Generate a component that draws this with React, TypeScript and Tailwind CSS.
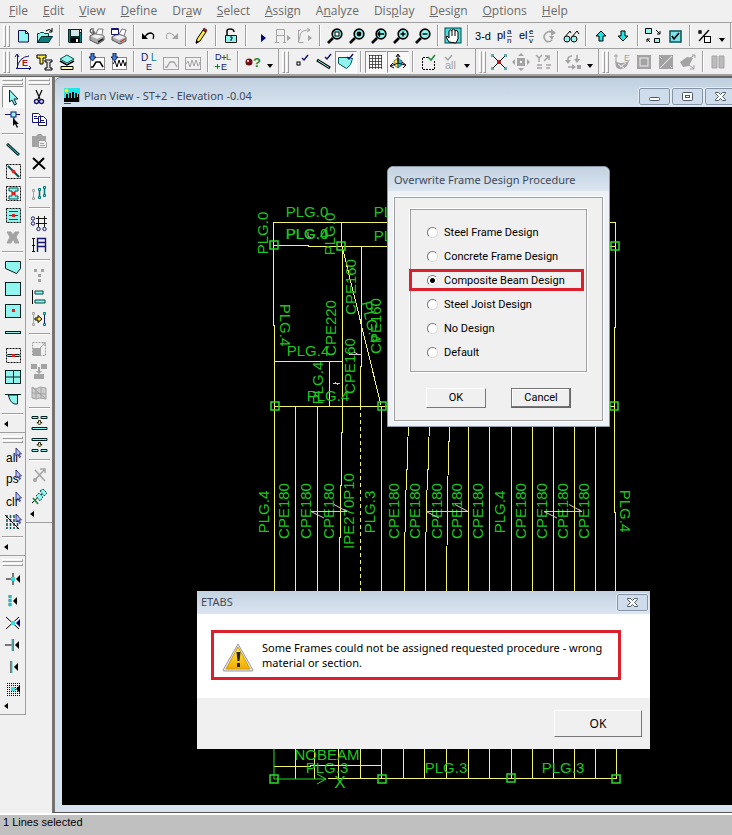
import React, { useState } from "react";
import clsx from "clsx";

const menus = [
	"File",
	"Edit",
	"View",
	"Define",
	"Draw",
	"Select",
	"Assign",
	"Analyze",
	"Display",
	"Design",
	"Options",
	"Help",
];

// index of the underlined letter, when it is not the first one
const hotkeys: Record<string, number> = { Draw: 2, Analyze: 1, Display: 3 };

const CY = "#8ff5ee";
const TEAL = "#0a7c80";
const GR = "#a3a3a3";
const NAVY = "#16166e";

const Lens = ({ children }: { children: React.ReactNode }) => (
	<g>
		<path d="M7 11L2 16" stroke="#000" strokeWidth="2.6" />
		<circle cx="11" cy="7" r="4.8" fill={CY} stroke="#000" strokeWidth="1.7" />
		{children}
	</g>
);

const Dots = () => (
	<rect x="2.5" y="2.5" width="14" height="14" stroke="#000" strokeDasharray="2 1" />
);

const SmallCursor = () => (
	<path d="M12 1v8l2-1.500 1.500 3 1-.5-1.500-3h2.500z" fill="#b8c4f0" stroke={NAVY} strokeWidth=".8" />
);

const LeftHead = () => <path d="M16 5v8l-4-4z" fill="#000" />;

const icons: Record<string, React.ReactNode> = {
	// file
	new: (
		<path d="M4.500 3.500h7l3 3v8.500h-10zM11.500 3.500v3h3" fill={CY} stroke="#114" />
	),
	open: (
		<g>
			<path d="M1.500 15.500v-9h2l1-1h3l1 1h4v3" fill={CY} stroke="#044" />
			<path d="M1.500 15.500l4-6h11l-4 6z" fill={TEAL} stroke="#022" />
			<path d="M10 4q3-3 6 0M16 1v4h-3" stroke="#000" />
		</g>
	),
	save: (
		<g>
			<path d="M2 2h14v14H3l-1-1z" fill="#042a2c" />
			<path d="M5 3h8v6H5z" fill="#d5e5e5" />
			<path d="M5 11h8v5H5z" fill="#000" />
			<path d="M10 12h2v3h-2zM14 3h1v2h-1z" fill="#fff" />
			<path d="M3 3h1v12H3zM14 6h1v9h-1z" fill={TEAL} />
		</g>
	),
	print: (
		<g>
			<path d="M2 9l5-3 9 3v4l-6 4-8-4z" fill="#aaa" stroke="#555" />
			<path d="M3 9l6 3 7-3-6-2z" fill="#eee" />
			<path d="M8 7l2-5h5l-1 6z" fill="#fff" stroke="#777" />
			<path d="M6 2q-4-1-4 2t4 2V4H4" stroke="#333" />
			<path d="M10 15l5-3" stroke="#222" strokeWidth="1.500" />
		</g>
	),
	preview: (
		<g>
			<path d="M2 10l5-3 9 3v4l-6 3-8-4z" fill="#aaa" stroke="#555" />
			<path d="M3 10l6 3 7-3-6-2z" fill="#eee" />
			<path d="M9 7l3-5 4 1-2 6z" fill="#fff" stroke="#777" />
			<path d="M1.500 1.500h7v6h-7z" fill="#fff" stroke={NAVY} />
			<path d="M1 2.500h8" stroke={NAVY} />
			<path d="M10 15l5-3" stroke="#c22" />
		</g>
	),
	undo: (
		<g>
			<path d="M2 6v6h6z" fill="#000" />
			<path d="M5 10q2-4 6-4 4 1 2 6" stroke="#000" strokeWidth="1.300" />
		</g>
	),
	redo: (
		<g>
			<path d="M16 6v6h-6z" fill={GR} />
			<path d="M13 10q-2-4-6-4-4 1-2 6" stroke={GR} />
		</g>
	),
	pencil: (
		<g>
			<path d="M5 12L11 3l3 2-6 9-4 2z" fill="#ffe93b" stroke="#000" />
			<path d="M11 3l1-2 3 2-1 2z" fill="#c22" stroke="#000" strokeWidth=".6" />
			<path d="M4 13v4l3-2z" fill="#000" />
		</g>
	),
	lock: (
		<g>
			<path d="M5 8V4q0-2 3-2 4 0 4 3" stroke="#111" strokeWidth="1.600" />
			<path d="M3.500 8.500h11v7h-11z" fill={CY} stroke="#111" />
			<path d="M8 10h2v2h-1v2" stroke="#111" />
		</g>
	),
	play: <path d="M9 7l5 4-5 4z" fill="#000080" />,
	frameStep: (
		<g>
			<path d="M2.500 15V2.500h8V15M2.500 8.500h8M1 15.500h4M9 15.500h3" stroke={GR} />
			<path d="M13 8l4 3-4 3z" fill={GR} />
		</g>
	),
	curveStep: (
		<g>
			<path d="M2.500 3v12.500h5M2.500 15l2-8q1-4 9-4M11 1l3 2-3 2M2 5l3-3" stroke={GR} />
			<path d="M12 8l4 3-4 3z" fill={GR} />
		</g>
	),
	// zoom
	zoomRect: (
		<Lens>
			<rect x="9" y="5" width="4" height="4" fill="#fff" stroke="#000" />
		</Lens>
	),
	zoomFull: (
		<Lens>
			<circle cx="11" cy="7" r="2.400" fill="#000" />
		</Lens>
	),
	zoomPrev: (
		<Lens>
			<path d="M8 7h6M10 4.500L8 7l2 2.500" stroke="#000" strokeWidth="1.400" />
		</Lens>
	),
	zoomIn: (
		<Lens>
			<path d="M8.500 7h5M11 4.500v5" stroke="#000" strokeWidth="1.400" />
		</Lens>
	),
	zoomOut: (
		<Lens>
			<path d="M8.500 7h5" stroke="#000" strokeWidth="1.400" />
		</Lens>
	),
	pan: (
		<g>
			<rect x="1" y="1" width="16" height="15" fill="#49dfe0" stroke="#044" />
			<path
				d="M5 15l-3-5 1-1 2 2V4l1.500-1L8 4V3l1.500-1L11 3v1l1.500-1L14 5v7l-2 4z"
				fill="#fff"
				stroke="#000"
			/>
			<path d="M8 4v5M11 4v5" stroke="#000" />
		</g>
	),
	view3d: (
		<text x="9" y="13" textAnchor="middle" fontSize="11" fill="#000">
			3-d
		</text>
	),
	plan: (
		<g fontSize="11" fill="#000">
			<text x="1" y="12">pl</text>
			<text x="11" y="7" fontSize="8">a</text>
			<text x="11" y="16" fontSize="8">n</text>
			<path d="M11 9.500h5" stroke="#000" strokeWidth=".6" />
		</g>
	),
	elev: (
		<g fontSize="11" fill="#000">
			<text x="1" y="12">el</text>
			<text x="11" y="7" fontSize="8">e</text>
			<text x="11" y="16" fontSize="8">v</text>
			<path d="M11 9.500h5" stroke="#000" strokeWidth=".6" />
		</g>
	),
	rotate: (
		<g>
			<path d="M12 13q-3 3-6 1-4-4 0-8 2-2 6-1" stroke={GR} strokeWidth="1.600" />
			<path d="M11 2l5 4-5 3zM9 9h5l-2 4z" fill={GR} />
		</g>
	),
	glasses: (
		<g>
			<circle cx="5" cy="12" r="3" fill={CY} stroke="#000" />
			<circle cx="12" cy="12" r="3" fill={CY} stroke="#000" />
			<path d="M2 11l6-7 1 2M9 11l6-7 2 3" stroke="#000" />
		</g>
	),
	up: <path d="M9 4l5 5h-3v5H7V9H4z" fill="#22e4e4" stroke="#000" />,
	down: <path d="M9 14L4 9h3V4h4v5h3z" fill="#22e4e4" stroke="#000" />,
	shrink: (
		<g>
			<path d="M1.500 1.500h6v5h-6zM10.500 11.500h5v4h-5z" fill={CY} stroke="#000" />
			<path d="M12 3l4 4M16 4v3h-3M6 15l-3-3M3 15v-3h3" stroke="#000" />
		</g>
	),
	check: (
		<g>
			<rect x="4" y="4" width="11" height="11" fill="#7fdfe8" stroke="#055" strokeWidth="1.500" />
			<path d="M6 9l2 3 5-6" stroke="#000" strokeWidth="1.500" />
		</g>
	),
	percent: (
		<g>
			<path d="M3 14L13 3M3 4h2v2H3z" stroke="#000" strokeWidth="1.300" />
			<rect x="8.500" y="9.500" width="6" height="6" stroke="#000" fill="#fff" />
		</g>
	),
	// define
	material: (
		<g>
			<path d="M3.500 2v13M2 15.500h14M3 15Q5 4 15 3M1 4l2-3 2 3M15 13l2 2-2 2" stroke={NAVY} />
			<text x="8" y="13" fontSize="9" fontWeight="bold" fill="#a01818">E</text>
		</g>
	),
	section: (
		<g>
			<path d="M1 2h9v3H7v6H4V5H1z" fill="#ffe93b" stroke="#000" />
			<path d="M9 7h7v2h-2v6h2v2H9v-2h2V9H9z" fill="#ddd" stroke="#000" />
		</g>
	),
	slab: (
		<g>
			<path d="M2 6l7-4 7 4-7 4z" fill={CY} stroke="#055" />
			<path d="M2 8l7 4 7-4" stroke="#000" strokeWidth="1.500" />
			<path d="M3 13.500h12v3H3z" fill="#fff59a" stroke="#000" />
		</g>
	),
	spectrum: (
		<g>
			<rect x="2.500" y="4.500" width="14" height="12" fill="#fff" stroke="#888" />
			<path d="M3 14h2l3-5h4l3 5" stroke="#000" strokeWidth="1.500" />
			<path d="M3 0h3v4h2L4.500 8 1 4h2z" fill="#38c" stroke={NAVY} />
		</g>
	),
	history: (
		<g>
			<rect x="2.500" y="4.500" width="14" height="12" fill="#fff" stroke="#888" />
			<path d="M3 11l2-3 2 6 2-7 2 6 2-6 2 6 1-4" stroke="#000" />
			<path d="M3 0h3v4h2L4.500 8 1 4h2z" fill="#38c" stroke={NAVY} />
		</g>
	),
	loadCases: (
		<g fontSize="10" fill={NAVY}>
			<text x="1" y="8">D</text>
			<text x="11" y="8" fill={TEAL}>L</text>
			<text x="6" y="17" fontSize="9">E</text>
		</g>
	),
	spectrumOff: (
		<g>
			<rect x="1.500" y="4.500" width="15" height="12" stroke={GR} />
			<path d="M3 14h2l3-5h4l3 5" stroke={GR} strokeWidth="1.300" />
		</g>
	),
	historyOff: (
		<g>
			<rect x="1.500" y="4.500" width="15" height="12" stroke={GR} />
			<path d="M2 11l2-3 2 6 2-7 2 6 2-6 2 6 2-4" stroke={GR} />
		</g>
	),
	combos: (
		<g fontSize="9" fill={NAVY}>
			<text x="1" y="7">D</text>
			<text x="12" y="7" fill={TEAL}>L</text>
			<text x="7" y="17">E</text>
			<path d="M7.500 4.500h5M10 2v5M1 13.500h5M3.500 11v5" stroke="#1a7a2a" />
		</g>
	),
	mass: (
		<g>
			<circle cx="5" cy="9" r="3.500" fill="#6b0f14" />
			<circle cx="4" cy="8" r="1.200" fill="#fbb" />
			<text x="9" y="14" fontSize="13" fontWeight="bold" fill="#2a8a3a">?</text>
		</g>
	),
	// snap and assign toggles
	drawPoint: (
		<g>
			<rect x="4" y="9" width="3" height="3" stroke="#000" />
			<path d="M9 5l2 2 4-5" stroke={NAVY} strokeWidth="1.500" />
		</g>
	),
	drawLine: (
		<g>
			<path d="M2 7l13 8" stroke="#000" strokeWidth="3" />
			<path d="M3 7.500l11 7" stroke={CY} />
			<path d="M10 4l2 2 4-5" stroke={NAVY} strokeWidth="1.500" />
		</g>
	),
	drawArea: (
		<g>
			<path d="M1.500 4.500h11l3 1-2 6-4 4-8-5z" fill={CY} stroke="#055" />
			<path d="M10 4l2 2 4-5" stroke={NAVY} strokeWidth="1.500" />
		</g>
	),
	grid: (
		<path
			d="M2.500 2v14M5.500 2v14M8.500 2v14M11.500 2v14M14.500 2v14M2 2.500h13M2 5.500h13M2 8.500h13M2 11.500h13M2 14.500h13"
			stroke="#333"
			strokeWidth=".8"
		/>
	),
	axes: (
		<g>
			<path d="M5 8l4-3v10l-4-3z" fill="#ffe93b" stroke="#333" strokeWidth=".6" />
			<path d="M9 5l4 3v4l-4 3z" fill="#27b7d8" stroke="#333" strokeWidth=".6" />
			<path d="M9 9V2M7 4l2-3 2 3M9 10l-7 3M4 10l-3 3 4 2M9 10l7 2M13 9l4 3-3 3" stroke="#000" />
		</g>
	),
	selectBox: (
		<g>
			<path d="M9 4.500H3.500v12h12V8" stroke="#000" strokeDasharray="2 1" />
			<path d="M9 4l3 3 4-5" stroke="#258a35" strokeWidth="1.600" />
		</g>
	),
	selectAllOff: (
		<g>
			<path d="M4 4l3 3 4-5" stroke={GR} strokeWidth="1.500" />
			<text x="4" y="16" fontSize="11" fill={GR}>all</text>
		</g>
	),
	meshPoint: (
		<g>
			<path d="M3 3l12 12M15 3L3 15" stroke="#000" />
			<path d="M1 1h3v3H1zM14 1h3v3h-3zM1 14h3v3H1zM14 14h3v3h-3z" fill={TEAL} opacity=".6" />
			<circle cx="9" cy="9" r="2" fill="#b01020" />
		</g>
	),
	moveOff: (
		<g fill={GR}>
			<path d="M5 5h8v8H5zM9 0l3 3H6zM9 18l3-3H6zM0 9l3-3v6zM18 9l-3-3v6z" />
			<path d="M8 8h2v2H8z" fill="#fff" />
		</g>
	),
	splitOff: (
		<g>
			<path d="M2 2l3 3 3-3M5 5v4M11 3h4v4M10 8l5-5M3 12h5M12 12h5M3 15h5M12 15h4" stroke={GR} strokeWidth="1.500" />
		</g>
	),
	swapOff: (
		<g>
			<path d="M8 3Q3 3 4 9M13 2v6M4 14h5" stroke={GR} strokeWidth="1.600" />
			<path d="M1 7h6l-3 4zM10 6h6l-3 4zM8 11l4 3-4 3zM13 12h4v4h-4z" fill={GR} />
		</g>
	),
	stressOff: (
		<g>
			<path d="M2 8q6 4 14 0l-2 5q-6 6-11 1z" fill={GR} />
			<path d="M1 3h4M3 1v8" stroke={GR} />
			<text x="11" y="8" fontSize="9" fill={GR}>E</text>
			<path d="M5 11l6 4M7 14l6-4" stroke="#eee" />
		</g>
	),
	areaHoleOff: (
		<g>
			<rect x="2" y="2" width="14" height="14" fill={GR} />
			<rect x="5" y="5" width="8" height="8" stroke="#eee" />
		</g>
	),
	areaCutOff: (
		<g>
			<rect x="2" y="2" width="14" height="14" fill={GR} />
			<path d="M3 15L15 3M3 4l2 2M13 13l2 2" stroke="#eee" />
		</g>
	),
	areaTurnOff: (
		<g>
			<path d="M1 9l7-5 6 1-4 8-6 1z" fill={GR} />
			<path d="M11 5l5-3M13 2h3v3M9 11l6 5M15 12v4h-4" stroke={GR} />
		</g>
	),
	wallsOff: <path d="M3 3h5v12H3zM10 3h5v12h-5z" fill="#bbb" stroke={GR} />,
	// draw palette
	pointer: (
		<path d="M5.500 2v12l2.500-2 2.500 5 2-1-2.500-5H14z" fill={CY} stroke="#023" />
	),
	reshape: (
		<g>
			<path d="M1 4.500h15M10 4v6" stroke={NAVY} />
			<rect x="7" y="2" width="5" height="5" fill={CY} stroke={NAVY} />
			<path d="M9 8v8l2-2 2 4 1-1-1.500-3H15z" fill="#000" />
		</g>
	),
	line: (
		<g>
			<path d="M3 4l12 11" stroke="#022" strokeWidth="3" />
			<path d="M3.500 4.500l11 10" stroke="#4cc" />
		</g>
	),
	lineRegion: (
		<g>
			<Dots />
			<path d="M4 4l11 11" stroke="#055" strokeWidth="2" />
			<circle cx="9.500" cy="9.500" r="1.800" fill="#d22" />
		</g>
	),
	column: (
		<g>
			<Dots />
			<path d="M5 4h9v3h-3v5h3v3H5v-3h3V7H5z" fill={CY} stroke="#055" />
			<rect x="8" y="8" width="3" height="3" fill="#d22" />
		</g>
	),
	secondary: (
		<g>
			<rect x="2.500" y="2.500" width="14" height="14" fill={CY} stroke="#000" strokeDasharray="2 1" />
			<path d="M5 5.500h9M5 9.500h9M5 13.500h9" stroke="#055" />
			<rect x="8" y="8" width="3" height="3" fill="#d22" />
		</g>
	),
	braceOff: (
		<path d="M3 4h4l2 3 2-3h4l-3 5 3 6h-4l-2-4-2 4H3l3-6z" fill={GR} stroke={GR} />
	),
	area: <path d="M1.500 3.500h15v7l-4 5-11-5z" fill={CY} stroke="#022" />,
	rect: <rect x="1.500" y="2.500" width="15" height="13" fill={CY} stroke="#022" />,
	rectPoint: (
		<g>
			<rect x="1.500" y="2.500" width="15" height="13" fill={CY} stroke="#022" />
			<rect x="8" y="7" width="3" height="3" fill="#d22" />
		</g>
	),
	wall: <rect x="1.500" y="7.500" width="15" height="2" fill={CY} stroke="#022" />,
	wallPoint: (
		<g>
			<Dots />
			<rect x="4" y="8.500" width="11" height="2" fill={CY} stroke="#022" />
			<rect x="8" y="8" width="3" height="3" fill="#d22" />
		</g>
	),
	opening: (
		<g>
			<rect x="1.500" y="2.500" width="15" height="13" fill={CY} stroke="#022" />
			<path d="M9.500 2v14M1 9h16" stroke="#022" />
		</g>
	),
	developed: (
		<g>
			<path d="M1 4.500h16" stroke="#022" />
			<path d="M4.500 5h9v9h-3q-5-2-6-9z" fill={CY} stroke="#022" />
		</g>
	),
	selAll: (
		<g>
			<text x="2" y="15" fontSize="12" fill="#000">all</text>
			<SmallCursor />
		</g>
	),
	selPrev: (
		<g>
			<text x="2" y="14" fontSize="12" fill="#000">ps</text>
			<SmallCursor />
		</g>
	),
	selClear: (
		<g>
			<text x="2" y="15" fontSize="12" fill="#000">clr</text>
			<SmallCursor />
		</g>
	),
	selLine: (
		<g>
			<path d="M3 2v14M6.500 2v14M10 2v14M13.500 2v14" stroke="#055" strokeWidth="1.500" strokeDasharray="3 1" />
			<path d="M1 2l14 14" stroke="#000" />
			<SmallCursor />
		</g>
	),
	snapPoint: (
		<g>
			<path d="M2 9h9M9 3v12" stroke="#000" />
			<rect x="7" y="7" width="4" height="4" fill="#3dd" />
			<LeftHead />
		</g>
	),
	snapMid: (
		<g>
			<path d="M6 3v12" stroke="#188" strokeWidth="3" strokeDasharray="3 1" />
			<path d="M6 3v12" stroke="#3ee" />
			<path d="M13 5v8l-4-4z" fill="#000" />
		</g>
	),
	snapCross: (
		<g>
			<path d="M2 3l13 12M15 3L2 15" stroke="#000" />
			<rect x="7" y="7" width="4" height="4" fill="#3dd" />
			<path d="M16 5v8l-4-4z" fill="#000060" />
		</g>
	),
	snapPerp: (
		<g>
			<path d="M1 9h7M9 3v12" stroke="#000" />
			<path d="M8 3v12" stroke="#3cc" />
			<path d="M15 5v8l-4-4z" fill="#000" />
		</g>
	),
	snapLine: (
		<g>
			<path d="M7 3v12" stroke="#000" />
			<path d="M8 3v12" stroke="#3cc" />
			<path d="M14 5v8l-4-4z" fill="#000" />
		</g>
	),
	snapFine: (
		<g>
			<path
				d="M3 3.500h13M3 5.500h13M3 7.500h13M3 9.500h13M3 11.500h13M3 13.500h13M3 15.500h13"
				stroke="#000"
				strokeDasharray="1 1"
			/>
			<rect x="7" y="7" width="4" height="4" fill="#3dd" />
			<LeftHead />
		</g>
	),
	// edit palette
	cut: (
		<g>
			<path d="M6 2l4 9M12 2L8 11" stroke="#111" strokeWidth="1.300" />
			<circle cx="6.500" cy="13.500" r="2" stroke={NAVY} strokeWidth="1.400" />
			<circle cx="11.500" cy="13.500" r="2" stroke={NAVY} strokeWidth="1.400" />
		</g>
	),
	copy: (
		<g>
			<path d="M2.500 3.500h6l2 2v7h-8zM8.500 6.500h5l3 3v6h-8z" fill="#fff" stroke={NAVY} />
			<path d="M4 6.500h3M4 8.500h4M10 10.500h4M10 12.500h5" stroke={NAVY} />
		</g>
	),
	pasteOff: (
		<g>
			<path d="M2 4h4l2-2h3l2 2h3v11H2z" fill={GR} />
			<path d="M8.500 8.500h6l2 2v5h-8z" fill="#eee" stroke={GR} />
			<path d="M10 11.500h4M10 13.500h5" stroke={GR} />
		</g>
	),
	remove: <path d="M3 4l12 11M14 4L3 15" stroke="#000" strokeWidth="2" />,
	replicate: (
		<g>
			<path d="M3.500 7v7" stroke={GR} />
			<path d="M9.500 5v8M14.500 3v8" stroke="#077" strokeWidth="1.500" />
			<path d="M2.500 5.500h2v2h-2zM2.500 13.500h2v2h-2z" fill="#eee" stroke={GR} />
			<path d="M8.500 4.500h2v2h-2zM8.500 12.500h2v2h-2zM13.500 2.500h2v2h-2zM13.500 10.500h2v2h-2z" fill={CY} stroke="#077" />
		</g>
	),
	editGrid: (
		<g>
			<path d="M6 4.500h11M6 9.500h11M8.500 2v11M14.500 2v11" stroke="#111" />
			<g stroke={NAVY}>
				<circle cx="3" cy="4.500" r="1.700" />
				<circle cx="3" cy="9.500" r="1.700" />
				<circle cx="8.500" cy="15" r="1.700" />
				<circle cx="14.500" cy="15" r="1.700" />
			</g>
		</g>
	),
	editStory: (
		<g>
			<path d="M3.500 2v14M2 2.500h3M2 9.500h3M2 15.500h3" stroke="#111" />
			<path d="M7.500 16V2.500h8V16M7.500 6.500h8M7.500 10.500h8" stroke={NAVY} strokeWidth="1.400" />
		</g>
	),
	mergeOff: (
		<g fill={GR}>
			<path d="M4 3h3v3H4zM11 3h3v3h-3zM8 8h3v3H8zM8 13h3v3H8z" />
		</g>
	),
	align: (
		<g>
			<path d="M2.500 2v14" stroke="#000" />
			<path d="M5 3h8v3H5zM5 12h10v3H5z" fill={CY} stroke="#044" />
		</g>
	),
	moveLines: (
		<g>
			<path d="M3.500 3v12" stroke={GR} />
			<path d="M14.500 3v12" stroke={NAVY} />
			<path d="M2.500 2.500h2v2h-2zM2.500 13.500h2v2h-2z" fill="#eee" stroke={GR} />
			<path d="M13.500 2.500h2v2h-2zM13.500 13.500h2v2h-2z" fill={CY} stroke="#077" />
			<path d="M5 8h3V5.500L12 9l-4 3.500V10H5z" fill="#ffe93b" stroke="#000" />
		</g>
	),
	expandOff: (
		<g>
			<rect x="2.500" y="2.500" width="13" height="13" stroke={GR} strokeDasharray="2 1" />
			<path d="M3 8h8v8H3z" fill={GR} />
			<path d="M10 8l5-5M12 3h3v3" stroke={GR} />
		</g>
	),
	joinOff: (
		<g fill={GR}>
			<path d="M1 2h6v5H1zM11 2h6v5h-6zM4 12h10v5H4zM8 5h2v4h2l-3 3-3-3h2z" />
		</g>
	),
	meshOff: (
		<g>
			<path d="M2 3l4 2 4-2 6 1v11l-6-1-4 1-4-1z" fill="#ccc" stroke={GR} />
			<path d="M6 4v11M11 4v11M2 9l14 1M3 4l12 10" stroke={GR} />
		</g>
	),
	joinLines: (
		<g>
			<path d="M2 2.500h6v2H2zM11 2.500h6v2h-6zM2 13.500h15v2H2z" fill={CY} stroke="#022" />
			<path d="M8.500 6.500h2v2h1.500L9.500 11 7 8.500h1.500z" fill="#ffe93b" stroke="#000" strokeWidth=".8" />
		</g>
	),
	divideLines: (
		<g>
			<path d="M2 2.500h15v2H2zM2 13.500h6v2H2zM11 13.500h6v2h-6z" fill={CY} stroke="#022" />
			<path d="M8.500 6.500h2v2h1.500L9.500 11 7 8.500h1.500z" fill="#ffe93b" stroke="#000" strokeWidth=".8" />
		</g>
	),
	extrudeOff: (
		<g>
			<path d="M5 14L14 4M5 4l10 11M10 3h5v4" stroke={GR} strokeWidth="1.500" />
			<circle cx="5" cy="14" r="2" fill={GR} />
		</g>
	),
	extrude: (
		<g>
			<path d="M2 15L15 3M3 10l5 6M11 3h4v4" stroke="#000" />
			<path d="M6 8l3-3 4 4-3 4zM10 3l3-2 4 4-3 3z" fill={CY} stroke="#055" strokeDasharray="2 1" />
			<path d="M3 10l5 6" stroke="#1a8a3a" strokeWidth="1.500" />
		</g>
	),
};

type BandItem = string;

// "|" is a separator, "v" the overflow arrow, a leading "*" means pressed
const fileBand: BandItem[] = "new open | save print preview | undo redo | pencil | lock | play frameStep curveStep | zoomRect zoomFull zoomPrev zoomIn zoomOut | pan | view3d plan elev rotate glasses | up down | shrink check | percent v".split(" ");

const secondRow: BandItem[][] = [
	"material section slab | spectrum history | loadCases spectrumOff historyOff | combos | mass v".split(" "),
	"drawPoint drawLine *drawArea | *grid *axes | selectBox selectAllOff v".split(" "),
	"meshPoint moveOff splitOff | swapOff v".split(" "),
	"stressOff areaHoleOff areaCutOff areaTurnOff | wallsOff wallsOff".split(" "),
];

const leftColumn: BandItem[][] = [
	"*pointer reshape | line lineRegion column secondary braceOff | area rect rectPoint wall wallPoint opening developed | v".split(" "),
	"selAll selPrev selClear selLine | v".split(" "),
	"snapPoint snapMid snapCross snapPerp snapLine snapFine v".split(" "),
];

const rightColumn: BandItem[] =
	"cut copy pasteOff remove | replicate | editGrid editStory | mergeOff align moveLines | expandOff joinOff meshOff | joinLines divideLines | extrudeOff extrude v".split(" ");

const Band = ({ items, vertical }: { items: BandItem[]; vertical?: boolean }) => (
	<div
		className={clsx(
			"group flex shrink-0 items-center border-[#a0a0a0]",
			vertical ? "flex-col border-b pb-[2px]" : "border-r pr-[2px]"
		)}>
		<span
			className={clsx(
				"flex shrink-0 items-center justify-center gap-px",
				vertical ? "h-3 w-full flex-col px-[2px] group-first:h-[9px]" : "h-[25px] w-3"
			)}>
			<span className={clsx("border border-t-white border-l-white border-r-[#a0a0a0] border-b-[#a0a0a0]", vertical ? "h-[3px] w-full" : "h-[22px] w-[3px]")} />
			<span className={clsx("border border-t-white border-l-white border-r-[#a0a0a0] border-b-[#a0a0a0]", vertical ? "h-[3px] w-full" : "h-[22px] w-[3px]")} />
		</span>
		{items.map((item, i) => {
			if (item === "|") {
				return (
					<span
						key={i}
						className={clsx("flex shrink-0 items-center justify-center", vertical ? "h-2 w-full" : "h-[22px] w-2")}>
						<span
							className={clsx("border-[#a0a0a0] bg-white", vertical ? "h-[2px] w-[21px] border-t" : "h-[21px] w-[2px] border-l")}
						/>
					</span>
				);
			}
			if (item === "v") {
				return (
					<button
						key={i}
						aria-label="More tools"
						className={clsx("flex shrink-0 justify-center", vertical ? "h-3 w-3 items-center self-start" : "h-[22px] w-3 items-end pb-1")}>
						<svg width="6" height="6" viewBox="0 0 6 6" fill="#000">
							<path d={vertical ? "M5 0v6L1 3z" : "M0 1h6L3 5z"} />
						</svg>
					</button>
				);
			}
			const pressed = item.startsWith("*");
			const name = item.replace("*", "");
			return (
				<button
					key={i}
					aria-label={name}
					aria-pressed={pressed}
					className={clsx(
						"flex h-[22px] w-[22px] shrink-0 items-center justify-center",
						pressed && "border border-t-[#909090] border-r-white border-b-white border-l-[#909090] bg-[#f8f8f8]"
					)}>
					<svg width="18" height="18" viewBox="0 0 18 18" fill="none" className="shrink-0">
						{icons[name]}
					</svg>
				</button>
			);
		})}
	</div>
);

type Pt = [number, number];
type Label = [string, number, number, number];

const beams: Pt[][] = [
	[[273.5, 325], [273.5, 222.5], [615.5, 222.5], [615.5, 327], [614.5, 327], [614.5, 512], [615.5, 512], [616.5, 779]],
	[[273.5, 325], [274.5, 326], [274.5, 749]],
	[[274, 245.5], [308, 245.5], [308, 246.5], [615, 246.5]],
	[[341.5, 222], [341.5, 246], [342.5, 246], [342.5, 432], [341.5, 433], [341.5, 485], [340.5, 486], [340.5, 537], [339.5, 538], [338.5, 779]],
	[[361.5, 246], [361.5, 366], [360.5, 366], [360.5, 406]],
	[[342, 246], [381, 405]],
	[[274, 361.5], [342, 361.5]],
	[[329.5, 361], [329.5, 406]],
	[[274, 406.5], [615, 406.5]],
	[[295.5, 406], [295.5, 779]],
	[[317.5, 406], [317.5, 600], [314.5, 779]],
	[[381.5, 406], [381.5, 779]],
	[[408.5, 406], [407.5, 469], [406.5, 470], [405.5, 511], [404.5, 554], [403.5, 779]],
	[[429.5, 406], [428.5, 469], [427.5, 470], [426.5, 511], [425.5, 554], [424.5, 779]],
	[[449.5, 406], [449.5, 441], [448.5, 442], [447.5, 512], [446.5, 582], [446.5, 779]],
	[[360.5, 749], [360.5, 779]],
	[[274, 766.5], [310, 766.5], [310, 765.5], [381, 765.5]],
	[[328, 778.5], [616, 778.5]],
];

const joists = [468.5, 489.5, 511.5, 532.5, 553.5, 574.5, 595.5];

const nodes: Pt[] = [
	[274, 245], [341, 246], [615, 246], [275, 406], [382, 406],
	[614, 406], [274, 779], [382, 779], [511, 778], [616, 779],
];

// text, centre x, centre y, rotation
const labels: Label[] = [
	["PLG.0", 307, 212, 0],
	["PLG.0", 307, 234, 0],
	["PLG.4", 307, 234, 0],
	["PLG.0", 395, 212, 0],
	["PLG.0", 395, 236, 0],
	["PLG.4", 308, 351, 0],
	["PLG.4", 328, 396, 0],
	["NOBEAM", 327, 755, 0],
	["PLG.3", 327, 768, 0],
	["PLG.3", 446, 768, 0],
	["PLG.3", 563, 768, 0],
	["PLG.0", 263, 233, -90],
	["PLG.0", 330, 234, -90],
	["CPE220", 331, 328, -90],
	["CPE160", 351, 287, -90],
	["CPE160", 350, 366, -90],
	["CPE160", 376, 326, -90],
	["PLG.4", 371, 322, 76],
	["PLG.4", 285, 325, 90],
	["PLG.4", 318, 383, -90],
	["PLG.4", 264, 512, -90],
	["CPE180", 284, 511, -90],
	["CPE180", 306, 511, -90],
	["CPE180", 329, 511, -90],
	["IPE270P10", 349, 511, -90],
	["PLG.3", 370, 512, -90],
	["CPE180", 394, 511, -90],
	["CPE180", 415, 511, -90],
	["CPE180", 437, 511, -90],
	["CPE180", 457, 511, -90],
	["CPE180", 478, 511, -90],
	["PLG.4", 500, 512, -90],
	["CPE180", 521, 511, -90],
	["CPE180", 542, 511, -90],
	["CPE180", 563, 511, -90],
	["CPE180", 584, 511, -90],
	["PLG.4", 625, 511, 90],
];

const spans: Pt[] = [[311, 347], [426, 468], [544, 582]];

const PlanDrawing = () => (
	<svg className="absolute inset-0 h-full w-full" fill="none" fontFamily="'Liberation Sans', Arial, sans-serif">
		<g transform="translate(-62 -107)">
			<g stroke="#f4f36c" shapeRendering="crispEdges">
				{beams.map((points, i) => (
					<polyline key={i} points={points.join(" ")} />
				))}
				{joists.map((x) => (
					<path key={x} d={`M${x} 406V779`} />
				))}
				<path d="M360.5 406V749" strokeDasharray="4 3" />
			</g>
			<g fill="#1fc51f" fontSize="15" textAnchor="middle">
				{labels.map(([text, x, y, angle], i) => (
					<text key={i} transform={`translate(${x} ${y}) rotate(${angle})`} y="5">
						{text}
					</text>
				))}
				<text x="340" y="788" fontSize="17">X</text>
			</g>
			<g stroke="#d8c4d0">
				{spans.map(([a, b]) => (
					<path key={a} d={`M${a + 13} 518L${a} 511.5H${b}L${b - 13} 504.500`} />
				))}
				<path d="M349 354.5h13M354 352l5 3M333 383.5h7M335 382l3 3M308 232v4l3 2" />
			</g>
			<g stroke="#2bdc2b" strokeWidth="1.500">
				{nodes.map(([x, y], i) => (
					<rect key={i} x={x - 4} y={y - 4} width="8" height="8" />
				))}
				<path d="M274 749v30h52M317 774l9 5-9 5" strokeWidth="1" />
			</g>
		</g>
	</svg>
);

const procedures = [
	"Steel Frame Design",
	"Concrete Frame Design",
	"Composite Beam Design",
	"Steel Joist Design",
	"No Design",
	"Default",
];

const ProcedureDialog = () => {
	const [selected, setSelected] = useState("Composite Beam Design");

	return (
		<section
			role="dialog"
			aria-labelledby="procedure-title"
			className="absolute top-[59px] left-[325px] w-[223px] rounded-t-md border border-[#8c99a6] bg-[#eef1f5] px-[6px] pb-[5px]">
			<h2
				id="procedure-title"
				className="-mx-[6px] h-6 rounded-t-md bg-linear-to-b from-[#c3d1e0] to-[#dbe6f1] pl-[6px] text-[11px] leading-[26px] whitespace-nowrap text-[#3f4a5a]">
				Overwrite Frame Design Procedure
			</h2>
			<div className="mt-[6px] border border-[#a0a0a0] bg-[#f0f0f0] px-[15px] pt-[11px] pb-3 font-[Roboto,Arial,sans-serif] text-[11px] text-black outline outline-white">
				<fieldset className="border border-[#a0a0a0] pt-[10px] pb-[7px] outline outline-white">
					{procedures.map((name) => (
						<label
							key={name}
							className={clsx(
								"flex h-6 items-center whitespace-nowrap",
								name === "Composite Beam Design" && "relative"
							)}>
							{name === "Composite Beam Design" && (
								<span className="absolute inset-y-[1px] right-[2px] -left-[2px] border-3 border-[#d9202c]" />
							)}
							<input
								type="radio"
								name="procedure"
								checked={selected === name}
								onChange={() => setSelected(name)}
								className="mr-[6px] ml-4 h-[11px] w-[11px] appearance-none rounded-full border border-t-[#777] border-r-[#ddd] border-b-[#ddd] border-l-[#777] bg-white checked:bg-[radial-gradient(circle,#000_2px,#fff_3px)]"
							/>
							<span className="pt-[2px]">{name}</span>
						</label>
					))}
				</fieldset>
				<div className="mt-4 flex justify-between px-4">
					<button className="h-5 w-[60px] border border-t-white border-r-[#777] border-b-[#777] border-l-white">
						OK
					</button>
					<button className="h-5 w-[60px] border border-t-[#777] border-r-[#666] border-b-[#666] border-l-[#777] shadow-[inset_-1px_-1px_0_#777,inset_1px_1px_0_#fff]">
						Cancel
					</button>
				</div>
			</div>
		</section>
	);
};

const CaptionButton = ({ kind }: { kind: "minimize" | "restore" | "close" }) => (
	<button
		aria-label={kind}
		className="flex h-[17px] w-[31px] shrink-0 items-center justify-center rounded-xs border border-[#8593a6] bg-[#cfdceb] outline outline-[#e3ecf5]">
		<svg width="13" height="11" viewBox="0 0 13 11" fill="#fff" stroke="#4c5666">
			{kind === "minimize" && <rect x="1.500" y="6.500" width="10" height="3" rx="1" />}
			{kind === "restore" && (
				<g>
					<rect x="1.500" y="1.500" width="10" height="8" rx="1" />
					<rect x="4.500" y="4.500" width="4" height="2" />
				</g>
			)}
			{kind === "close" && (
				<path d="M1.500 1.500h3l2 2 2-2h3v1l-3 3 3 3v1h-3l-2-2-2 2h-3v-1l3-3-3-3z" />
			)}
		</svg>
	</button>
);

const WarningDialog = () => (
	<section
		role="alertdialog"
		aria-labelledby="warning-title"
		className="absolute top-[484px] left-[135px] w-[453px] bg-[#f0f0f0]">
		<header className="flex h-[23px] items-center justify-between bg-linear-to-b from-[#c3d1e0] to-[#dbe6f1] pr-[2px] pl-1">
			<h2 id="warning-title" className="text-[11px] text-[#3f4a5a]">ETABS</h2>
			<CaptionButton kind="close" />
		</header>
		<div className="bg-white px-[14px] pt-4 pb-[18px]">
			<div className="mr-[15px] flex h-[50px] items-center border-3 border-[#d9202c] pl-2">
				<svg width="32" height="29" viewBox="0 0 32 29" className="mt-1 shrink-0">
					<defs>
						<linearGradient id="warn" x1="0" y1="0" x2="0" y2="1">
							<stop offset="0" stopColor="#fff04a" />
							<stop offset="1" stopColor="#f2a900" />
						</linearGradient>
					</defs>
					<path d="M16 1L31 27q0 1-1 1H2q-1 0-1-1z" fill="#e4e4e4" stroke="#9a9a9a" />
					<path d="M16 4L28 26H4z" fill="url(#warn)" stroke="#d79b00" />
					<path d="M14.500 9h4l-1 9h-2z" fill="#222" />
					<rect x="15" y="20" width="3" height="4" fill="#222" />
				</svg>
				<p className="ml-2 text-[11px] leading-[15px] whitespace-nowrap text-black">
					Some Frames could not be assigned requested procedure - wrong
					<br />
					material or section.
				</p>
			</div>
		</div>
		<div className="flex justify-end px-2 pt-3 pb-3">
			<button className="h-[27px] w-[88px] border border-t-white border-r-[#777] border-b-[#777] border-l-white text-xs text-black">
				OK
			</button>
		</div>
	</section>
);

const App = () => {
	return (
		<div className="flex min-h-screen flex-col overflow-hidden bg-[#f0f0f0] font-['Noto_Sans','Open_Sans',sans-serif]">
			<nav className="flex h-[22px] items-center gap-[15px] pl-[9px] font-['Open_Sans','Noto_Sans',sans-serif] text-xs text-[#6b6b6b]">
				{menus.map((menu) => {
					const k = hotkeys[menu] ?? 0;
					return (
						<button key={menu} className="leading-[22px]">
							{menu.slice(0, k)}
							<span className="underline">{menu[k]}</span>
							{menu.slice(k + 1)}
						</button>
					);
				})}
			</nav>

			<div className="flex border-t border-[#a0a0a0] font-['Liberation_Sans',Arial,sans-serif]">
				<Band items={fileBand} />
			</div>
			<div className="flex w-full overflow-hidden border-t border-b-2 border-t-[#a0a0a0] border-b-[#a0a0a0] font-['Liberation_Sans',Arial,sans-serif]">
				{secondRow.map((items, i) => (
					<Band key={i} items={items} />
				))}
			</div>

			<main className="flex flex-1 border-t border-[#606060]">
				<aside className="flex shrink-0 items-start font-['Liberation_Sans',Arial,sans-serif]">
					<div className="w-[26px] border-r border-[#a0a0a0]">
						{leftColumn.map((items, i) => (
							<Band key={i} items={items} vertical />
						))}
					</div>
					<div className="w-[26px]">
						<Band items={rightColumn} vertical />
					</div>
				</aside>

				<section className="flex min-w-0 flex-1 flex-col border-b border-l-3 border-b-[#555] border-l-[#77736f] bg-[#d7e4f0]">
					<header className="flex h-[30px] items-center overflow-hidden rounded-tl-md border-t border-[#666] bg-linear-to-b from-[#c0cfdf] to-[#d7e4f0] pt-[7px] pl-[9px]">
						<svg width="16" height="16" viewBox="0 0 16 16" className="shrink-0">
							<rect width="16" height="14" fill="#1fe5ea" />
							<path d="M0 14V10h2V6h2v4h1V5h2v5h1V4h2v6h1V5h2v4h1V6h1v8z" fill="#000" />
							<circle cx="2.500" cy="2.500" r="2" fill="#ffe21a" />
							<path d="M0 15.500h7" stroke="#24b" />
						</svg>
						<h1 className="ml-1 flex-1 text-[11px] whitespace-nowrap text-[#3f4a5a]">
							Plan View - ST+2 - Elevation -0.04
						</h1>
						<div className="-mr-1 flex gap-[2px]">
							<CaptionButton kind="minimize" />
							<CaptionButton kind="restore" />
							<CaptionButton kind="close" />
						</div>
					</header>
					<div className="relative mb-[7px] ml-[7px] flex-1 overflow-hidden bg-black">
						<PlanDrawing />
						<ProcedureDialog />
						<WarningDialog />
					</div>
				</section>
			</main>

			<footer className="h-[22px] border-t-2 border-white bg-[#c0c0c0] pl-[3px] font-['Liberation_Sans',Arial,sans-serif] text-[11px] leading-[14px] text-black">
				1 Lines selected
			</footer>
		</div>
	);
};

export default App;
